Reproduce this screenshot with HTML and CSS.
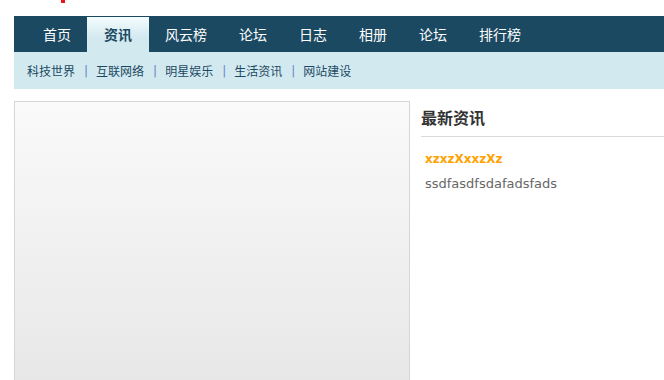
FILE: index.html
```html
<!DOCTYPE html>
<html lang="zh-CN">
<head>
    <meta charset="UTF-8">
    <meta name="viewport" content="width=device-width, initial-scale=1.0">
    <title>资讯</title>
    <link rel="stylesheet" href="styles.css">
</head>
<body>
    <div class="wrap">
        <div class="header">
            <span class="logo"></span>
        </div>
        <ul class="nav">
            <li><a href="#">首页</a></li>
            <li class="active"><a href="#">资讯</a></li>
            <li><a href="#">风云榜</a></li>
            <li><a href="#">论坛</a></li>
            <li><a href="#">日志</a></li>
            <li><a href="#">相册</a></li>
            <li><a href="#">论坛</a></li>
            <li><a href="#">排行榜</a></li>
        </ul>
        <div class="subnav">
            <a href="#">科技世界</a><span class="sep">|</span>
            <a href="#">互联网络</a><span class="sep">|</span>
            <a href="#">明星娱乐</a><span class="sep">|</span>
            <a href="#">生活资讯</a><span class="sep">|</span>
            <a href="#">网站建设</a>
        </div>
        <div class="main">
            <div class="slide"></div>
            <div class="side">
                <h2>最新资讯</h2>
                <div class="news">
                    <a href="#" class="news-title">xzxzXxxzXz</a>
                    <p>ssdfasdfsdafadsfads</p>
                </div>
            </div>
        </div>
    </div>
</body>
</html>
```

FILE: styles.css
```css
body {
    margin: 0;
    padding: 0;
    font-family: "DejaVu Sans", Verdana, "Noto Sans CJK SC", sans-serif;
    font-size: 12px;
    background-color: #fff;
    overflow: hidden;
}
a {
    text-decoration: none;
}
.wrap {
    padding-left: 14px;
}
.header {
    height: 16px;
}
.logo {
    display: block;
    width: 4px;
    height: 3px;
    margin-left: 47px;
    background-color: #e8141e; /* bit of red logo */
}
.nav {
    display: flex;
    margin: 0;
    padding: 0 0 0 13px;
    height: 36px;
    list-style: none;
    background-color: #1b4962;
}
.nav li {
    display: flex;
}
.nav a {
    display: block;
    padding: 0 16px;
    line-height: 36px;
    font-family: "Noto Sans CJK SC", sans-serif;
    font-size: 14px;
    color: #fff;
}
.nav .active a {
    margin-top: 1px;
    padding: 0 17px;
    line-height: 35px;
    font-weight: bold;
    color: #1b4962;
    background: linear-gradient(to bottom, #f4fcfe, #d3e9f0 60%);
}
.subnav {
    display: flex;
    align-items: center;
    height: 37px;
    padding-left: 13px;
    background-color: #d3e9f0;
    font-family: "Noto Sans CJK SC", sans-serif;
    font-size: 12px;
}
.subnav a {
    color: #1b4962;
}
.subnav .sep {
    margin: 0 8px 0 9px;
    color: #6a86c4;
    font-family: "DejaVu Sans", sans-serif;
}
.main {
    display: flex;
    margin-top: 12px;
}
.slide {
    flex: none;
    width: 394px;
    height: 300px;
    border: 1px solid #d6d6d6;
    background: linear-gradient(to bottom, #fafafa, #e6e6e6);
}
.side {
    flex: 1;
    margin-left: 11px;
}
.side h2 {
    margin: 0;
    padding: 5px 0 8px;
    border-bottom: 1px solid #d9d9d9;
    font-family: "Noto Sans CJK SC", sans-serif;
    font-size: 16px;
    line-height: 22px;
    color: #333;
}
.news {
    padding: 13px 4px 0;
}
.news-title {
    display: block;
    font-weight: bold;
    font-size: 12px;
    line-height: 18px;
    color: #ffa200;
}
.news p {
    margin: 7px 0 0;
    font-size: 13px;
    line-height: 18px;
    color: #666;
}
```
